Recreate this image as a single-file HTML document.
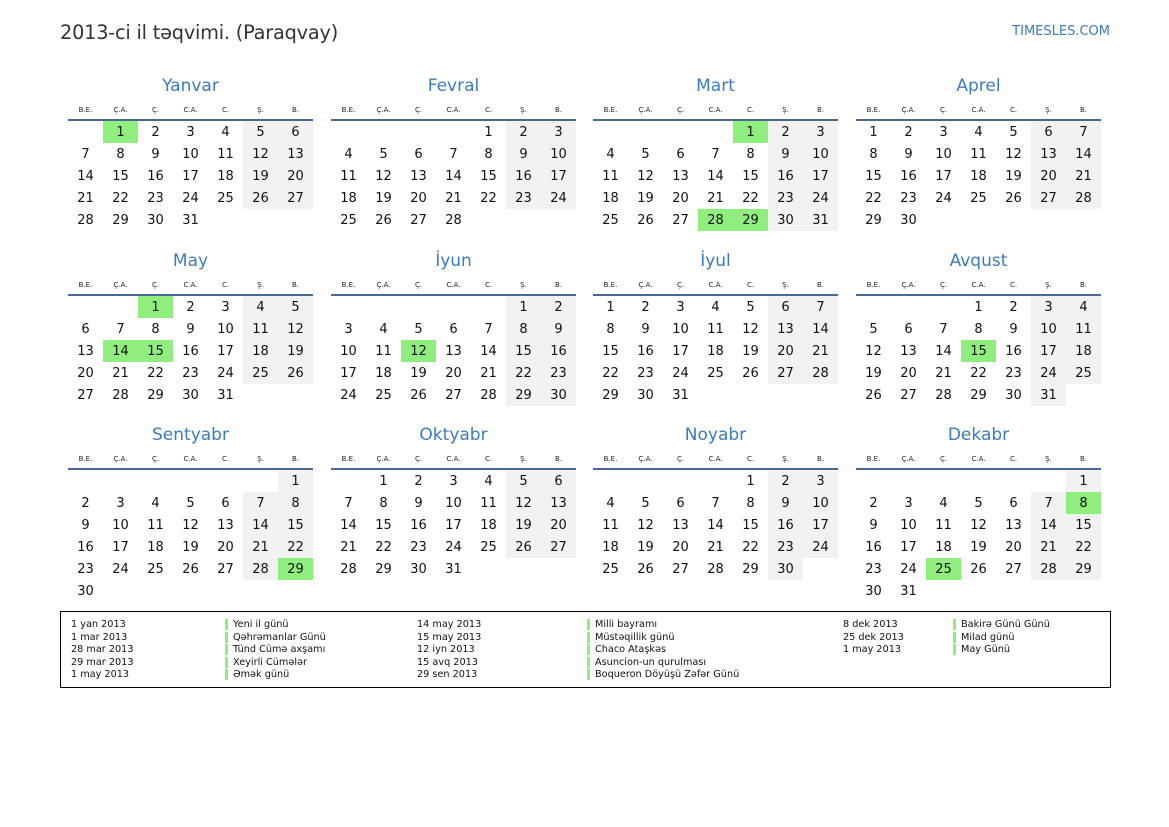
<!DOCTYPE html>
<html><head><meta charset="utf-8"><style>
*{margin:0;padding:0;box-sizing:border-box}
body{width:1169px;height:827px;background:#fff;font-family:"DejaVu Sans","Liberation Sans",sans-serif;color:#111;position:relative;overflow:hidden}
i{font-style:normal}
.t{position:absolute;left:60px;top:21px;font-size:19.3px;color:#333;letter-spacing:-0.2px}
.s{position:absolute;right:59px;top:24px;font-size:13px;color:#3a7cc2}
.m{position:absolute;width:245px}
.m h2{position:absolute;top:75px;left:0;width:245px;text-align:center;font-weight:normal;font-size:17px;line-height:22px;color:#3a7cc2}
.hd{position:absolute;top:104px;left:0;width:245px;display:grid;grid-template-columns:repeat(7,35px);font-size:7px;line-height:12px;text-align:center;color:#222}
.ln{position:absolute;top:119px;left:0;width:245px;height:2px;background:#4a6896}
.g{position:absolute;top:121px;left:0;width:245px;display:grid;grid-template-columns:repeat(7,35px);grid-auto-rows:22px;font-size:13px;text-align:center;line-height:23px}
.g span:nth-child(7n+6):not(:empty),.g span:nth-child(7n):not(:empty){background:#f2f2f2}
.g span.h{background:#90ee7e!important}
.lg{position:absolute;left:60px;top:611px;width:1051px;height:77px;border:1px solid #000}
.c{position:absolute;top:6px;font-size:9.7px;line-height:12.5px;color:#111}
.c.b span{display:block;border-left:3px solid #90ee7e;padding-left:5px;height:11px;line-height:11px;margin-bottom:1.5px}
</style></head><body>
<div class="t">2013-ci il təqvimi. (Paraqvay)</div>
<div class="s">TIMESLES.COM</div>

<div class="m" style="left:68px;top:0"><h2>Yanvar</h2><div class="hd"><i>B.E.</i><i>Ç.A.</i><i>Ç.</i><i>C.A.</i><i>C.</i><i>Ş.</i><i>B.</i></div><div class="ln"></div><div class="g"><span></span><span class="h">1</span><span>2</span><span>3</span><span>4</span><span>5</span><span>6</span><span>7</span><span>8</span><span>9</span><span>10</span><span>11</span><span>12</span><span>13</span><span>14</span><span>15</span><span>16</span><span>17</span><span>18</span><span>19</span><span>20</span><span>21</span><span>22</span><span>23</span><span>24</span><span>25</span><span>26</span><span>27</span><span>28</span><span>29</span><span>30</span><span>31</span></div></div>

<div class="m" style="left:331px;top:0"><h2>Fevral</h2><div class="hd"><i>B.E.</i><i>Ç.A.</i><i>Ç.</i><i>C.A.</i><i>C.</i><i>Ş.</i><i>B.</i></div><div class="ln"></div><div class="g"><span></span><span></span><span></span><span></span><span>1</span><span>2</span><span>3</span><span>4</span><span>5</span><span>6</span><span>7</span><span>8</span><span>9</span><span>10</span><span>11</span><span>12</span><span>13</span><span>14</span><span>15</span><span>16</span><span>17</span><span>18</span><span>19</span><span>20</span><span>21</span><span>22</span><span>23</span><span>24</span><span>25</span><span>26</span><span>27</span><span>28</span></div></div>

<div class="m" style="left:593px;top:0"><h2>Mart</h2><div class="hd"><i>B.E.</i><i>Ç.A.</i><i>Ç.</i><i>C.A.</i><i>C.</i><i>Ş.</i><i>B.</i></div><div class="ln"></div><div class="g"><span></span><span></span><span></span><span></span><span class="h">1</span><span>2</span><span>3</span><span>4</span><span>5</span><span>6</span><span>7</span><span>8</span><span>9</span><span>10</span><span>11</span><span>12</span><span>13</span><span>14</span><span>15</span><span>16</span><span>17</span><span>18</span><span>19</span><span>20</span><span>21</span><span>22</span><span>23</span><span>24</span><span>25</span><span>26</span><span>27</span><span class="h">28</span><span class="h">29</span><span>30</span><span>31</span></div></div>

<div class="m" style="left:856px;top:0"><h2>Aprel</h2><div class="hd"><i>B.E.</i><i>Ç.A.</i><i>Ç.</i><i>C.A.</i><i>C.</i><i>Ş.</i><i>B.</i></div><div class="ln"></div><div class="g"><span>1</span><span>2</span><span>3</span><span>4</span><span>5</span><span>6</span><span>7</span><span>8</span><span>9</span><span>10</span><span>11</span><span>12</span><span>13</span><span>14</span><span>15</span><span>16</span><span>17</span><span>18</span><span>19</span><span>20</span><span>21</span><span>22</span><span>23</span><span>24</span><span>25</span><span>26</span><span>27</span><span>28</span><span>29</span><span>30</span></div></div>

<div class="m" style="left:68px;top:175px"><h2>May</h2><div class="hd"><i>B.E.</i><i>Ç.A.</i><i>Ç.</i><i>C.A.</i><i>C.</i><i>Ş.</i><i>B.</i></div><div class="ln"></div><div class="g"><span></span><span></span><span class="h">1</span><span>2</span><span>3</span><span>4</span><span>5</span><span>6</span><span>7</span><span>8</span><span>9</span><span>10</span><span>11</span><span>12</span><span>13</span><span class="h">14</span><span class="h">15</span><span>16</span><span>17</span><span>18</span><span>19</span><span>20</span><span>21</span><span>22</span><span>23</span><span>24</span><span>25</span><span>26</span><span>27</span><span>28</span><span>29</span><span>30</span><span>31</span></div></div>

<div class="m" style="left:331px;top:175px"><h2>İyun</h2><div class="hd"><i>B.E.</i><i>Ç.A.</i><i>Ç.</i><i>C.A.</i><i>C.</i><i>Ş.</i><i>B.</i></div><div class="ln"></div><div class="g"><span></span><span></span><span></span><span></span><span></span><span>1</span><span>2</span><span>3</span><span>4</span><span>5</span><span>6</span><span>7</span><span>8</span><span>9</span><span>10</span><span>11</span><span class="h">12</span><span>13</span><span>14</span><span>15</span><span>16</span><span>17</span><span>18</span><span>19</span><span>20</span><span>21</span><span>22</span><span>23</span><span>24</span><span>25</span><span>26</span><span>27</span><span>28</span><span>29</span><span>30</span></div></div>

<div class="m" style="left:593px;top:175px"><h2>İyul</h2><div class="hd"><i>B.E.</i><i>Ç.A.</i><i>Ç.</i><i>C.A.</i><i>C.</i><i>Ş.</i><i>B.</i></div><div class="ln"></div><div class="g"><span>1</span><span>2</span><span>3</span><span>4</span><span>5</span><span>6</span><span>7</span><span>8</span><span>9</span><span>10</span><span>11</span><span>12</span><span>13</span><span>14</span><span>15</span><span>16</span><span>17</span><span>18</span><span>19</span><span>20</span><span>21</span><span>22</span><span>23</span><span>24</span><span>25</span><span>26</span><span>27</span><span>28</span><span>29</span><span>30</span><span>31</span></div></div>

<div class="m" style="left:856px;top:175px"><h2>Avqust</h2><div class="hd"><i>B.E.</i><i>Ç.A.</i><i>Ç.</i><i>C.A.</i><i>C.</i><i>Ş.</i><i>B.</i></div><div class="ln"></div><div class="g"><span></span><span></span><span></span><span>1</span><span>2</span><span>3</span><span>4</span><span>5</span><span>6</span><span>7</span><span>8</span><span>9</span><span>10</span><span>11</span><span>12</span><span>13</span><span>14</span><span class="h">15</span><span>16</span><span>17</span><span>18</span><span>19</span><span>20</span><span>21</span><span>22</span><span>23</span><span>24</span><span>25</span><span>26</span><span>27</span><span>28</span><span>29</span><span>30</span><span>31</span></div></div>

<div class="m" style="left:68px;top:349px"><h2>Sentyabr</h2><div class="hd"><i>B.E.</i><i>Ç.A.</i><i>Ç.</i><i>C.A.</i><i>C.</i><i>Ş.</i><i>B.</i></div><div class="ln"></div><div class="g"><span></span><span></span><span></span><span></span><span></span><span></span><span>1</span><span>2</span><span>3</span><span>4</span><span>5</span><span>6</span><span>7</span><span>8</span><span>9</span><span>10</span><span>11</span><span>12</span><span>13</span><span>14</span><span>15</span><span>16</span><span>17</span><span>18</span><span>19</span><span>20</span><span>21</span><span>22</span><span>23</span><span>24</span><span>25</span><span>26</span><span>27</span><span>28</span><span class="h">29</span><span>30</span></div></div>

<div class="m" style="left:331px;top:349px"><h2>Oktyabr</h2><div class="hd"><i>B.E.</i><i>Ç.A.</i><i>Ç.</i><i>C.A.</i><i>C.</i><i>Ş.</i><i>B.</i></div><div class="ln"></div><div class="g"><span></span><span>1</span><span>2</span><span>3</span><span>4</span><span>5</span><span>6</span><span>7</span><span>8</span><span>9</span><span>10</span><span>11</span><span>12</span><span>13</span><span>14</span><span>15</span><span>16</span><span>17</span><span>18</span><span>19</span><span>20</span><span>21</span><span>22</span><span>23</span><span>24</span><span>25</span><span>26</span><span>27</span><span>28</span><span>29</span><span>30</span><span>31</span></div></div>

<div class="m" style="left:593px;top:349px"><h2>Noyabr</h2><div class="hd"><i>B.E.</i><i>Ç.A.</i><i>Ç.</i><i>C.A.</i><i>C.</i><i>Ş.</i><i>B.</i></div><div class="ln"></div><div class="g"><span></span><span></span><span></span><span></span><span>1</span><span>2</span><span>3</span><span>4</span><span>5</span><span>6</span><span>7</span><span>8</span><span>9</span><span>10</span><span>11</span><span>12</span><span>13</span><span>14</span><span>15</span><span>16</span><span>17</span><span>18</span><span>19</span><span>20</span><span>21</span><span>22</span><span>23</span><span>24</span><span>25</span><span>26</span><span>27</span><span>28</span><span>29</span><span>30</span></div></div>

<div class="m" style="left:856px;top:349px"><h2>Dekabr</h2><div class="hd"><i>B.E.</i><i>Ç.A.</i><i>Ç.</i><i>C.A.</i><i>C.</i><i>Ş.</i><i>B.</i></div><div class="ln"></div><div class="g"><span></span><span></span><span></span><span></span><span></span><span></span><span>1</span><span>2</span><span>3</span><span>4</span><span>5</span><span>6</span><span>7</span><span class="h">8</span><span>9</span><span>10</span><span>11</span><span>12</span><span>13</span><span>14</span><span>15</span><span>16</span><span>17</span><span>18</span><span>19</span><span>20</span><span>21</span><span>22</span><span>23</span><span>24</span><span class="h">25</span><span>26</span><span>27</span><span>28</span><span>29</span><span>30</span><span>31</span></div></div>

<div class="lg">
<div class="c" style="left:10px;top:7px">1 yan 2013<br>1 mar 2013<br>28 mar 2013<br>29 mar 2013<br>1 may 2013</div>
<div class="c b" style="left:164px;top:7px"><span>Yeni il günü</span><span>Qəhrəmanlar Günü</span><span>Tünd Cümə axşamı</span><span>Xeyirli Cümələr</span><span>Əmək günü</span></div>
<div class="c" style="left:356px;top:7px">14 may 2013<br>15 may 2013<br>12 iyn 2013<br>15 avq 2013<br>29 sen 2013</div>
<div class="c b" style="left:526px;top:7px"><span>Milli bayramı</span><span>Müstəqillik günü</span><span>Chaco Ataşkəs</span><span>Asuncion-un qurulması</span><span>Boqueron Döyüşü Zəfər Günü</span></div>
<div class="c" style="left:782px;top:7px">8 dek 2013<br>25 dek 2013<br>1 may 2013</div>
<div class="c b" style="left:892px;top:7px"><span>Bakirə Günü Günü</span><span>Milad günü</span><span>May Günü</span></div>
</div>
</body></html>
